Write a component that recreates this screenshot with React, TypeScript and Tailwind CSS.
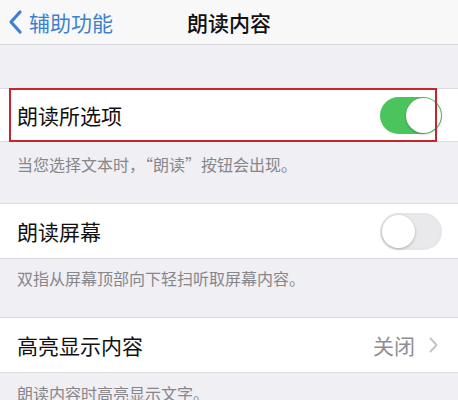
import React from "react";

const font = { fontFamily: '"Noto Sans CJK SC", "Noto Sans", sans-serif' };

function Toggle({ on }: { on: boolean }) {
  return on ? (
    <div className="relative h-[37px] w-[62px] rounded-full bg-[#4cc45d]">
      <div className="absolute right-[1px] top-[1px] h-[35px] w-[35px] rounded-full bg-white shadow-[0_1px_3px_rgba(0,0,0,0.25)]" />
    </div>
  ) : (
    <div className="relative h-[37px] w-[62px] rounded-full border-[2px] border-[#e6e6e8] bg-[#e9e9eb]">
      <div className="absolute left-[0px] top-[0px] h-[33px] w-[33px] rounded-full bg-white shadow-[0_1px_3px_rgba(0,0,0,0.25)]" />
    </div>
  );
}

export default function App() {
  return (
    <div className="flex h-[400px] w-[458px] flex-col overflow-hidden bg-[#efeff4]" style={font}>
      <div className="relative flex h-[45px] shrink-0 items-center border-b border-[#d6d6da] bg-[#f8f8f9]">
        <div className="flex items-center pl-[7px] text-[#3f7fd0]">
          <svg width="17" height="26" viewBox="0 0 17 26" fill="none">
            <path d="M13 3 L4 13 L13 23" stroke="#3f7fd0" strokeWidth="3.2" strokeLinecap="round" strokeLinejoin="round" />
          </svg>
          <span className="ml-[5px] text-[21px] leading-none">辅助功能</span>
        </div>
        <div className="absolute left-0 right-0 text-center text-[21px] font-medium leading-none text-[#111]">
          朗读内容
        </div>
      </div>

      <div className="h-[43px] shrink-0" />

      <div className="relative flex h-[54px] shrink-0 items-center justify-between border-y border-[#dcdce0] bg-white pl-[17px] pr-[16px]">
        <span className="text-[21px] leading-none text-[#111]">朗读所选项</span>
        <Toggle on />
        <div className="absolute bottom-[-1px] left-[9px] right-[21px] top-[-1px] border-[2px] border-[#c5262e]" />
      </div>

      <div className="h-[61px] shrink-0 pl-[17px] pt-[11px] text-[16px] leading-[22px] text-[#86868b]">
        当您选择文本时，“朗读”按钮会出现。
      </div>

      <div className="flex h-[56px] shrink-0 items-center justify-between border-y border-[#dcdce0] bg-white pl-[17px] pr-[16px]">
        <span className="text-[21px] leading-none text-[#111]">朗读屏幕</span>
        <Toggle on={false} />
      </div>

      <div className="h-[58px] shrink-0 pl-[17px] pt-[8px] text-[16px] leading-[22px] text-[#86868b]">
        双指从屏幕顶部向下轻扫听取屏幕内容。
      </div>

      <div className="flex h-[56px] shrink-0 items-center justify-between border-y border-[#dcdce0] bg-white pl-[17px] pr-[20px]">
        <span className="text-[21px] leading-none text-[#111]">高亮显示内容</span>
        <div className="flex items-center gap-[14px]">
          <span className="text-[21px] leading-none text-[#8e8e93]">关闭</span>
          <svg width="9" height="16" viewBox="0 0 9 16" fill="none">
            <path d="M1.5 1.5 L7.5 8 L1.5 14.5" stroke="#c4c4c8" strokeWidth="2" strokeLinecap="round" strokeLinejoin="round" />
          </svg>
        </div>
      </div>

      <div className="shrink-0 pl-[17px] pt-[9px] text-[16px] leading-[22px] text-[#86868b]">
        朗读内容时高亮显示文字。
      </div>
    </div>
  );
}
